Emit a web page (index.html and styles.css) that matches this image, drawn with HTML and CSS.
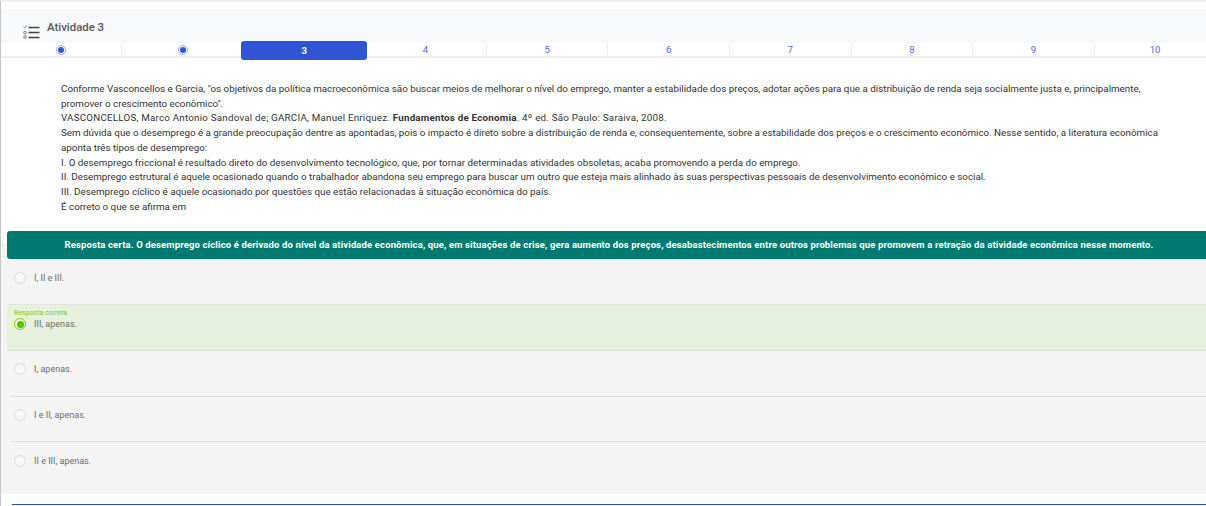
FILE: index.html
```html
<html>
<head>
	<meta charset="utf-8">
	<meta name="viewport" content="width=device-width, initial-scale=1">
	<title>Atividade 3</title>
	<link rel="stylesheet" href="styles.css">
</head>
<body>

	<header class="head">
		<svg class="head-icon" width="17" height="14" viewBox="0 0 17 14">
			<path d="M0.5 2 L1.7 3 L3.8 0.6" fill="none" stroke="#555" stroke-width="0.8"/>
			<circle cx="2" cy="7.5" r="1.3" fill="none" stroke="#666" stroke-width="0.8"/>
			<circle cx="2" cy="12" r="1.3" fill="none" stroke="#666" stroke-width="0.8"/>
			<path d="M5.5 2.5 H16.5 M5.5 7.5 H16.5 M5.5 12.5 H16.5" stroke="#444" stroke-width="1.4"/>
		</svg>
		<h1>Atividade 3</h1>
	</header>

	<nav class="steps">
		<div class="step"><span class="dot"></span></div>
		<div class="step"><span class="dot"></span></div>
		<div class="step active">3</div>
		<div class="step">4</div>
		<div class="step">5</div>
		<div class="step">6</div>
		<div class="step">7</div>
		<div class="step">8</div>
		<div class="step">9</div>
		<div class="step">10</div>
	</nav>

	<section class="question">
		<p>Conforme Vasconcellos e Garcia, "os objetivos da política macroeconômica são buscar meios de melhorar o nível do emprego, manter a estabilidade dos preços, adotar ações para que a distribuição de renda seja socialmente justa e, principalmente, promover o crescimento econômico".</p>
		<p class="source">VASCONCELLOS, Marco Antonio Sandoval de; GARCIA, Manuel Enriquez. <b>Fundamentos de Economia</b>. 4º ed. São Paulo: Saraiva, 2008.</p>
		<p>Sem dúvida que o desemprego é a grande preocupação dentre as apontadas, pois o impacto é direto sobre a distribuição de renda e, consequentemente, sobre a estabilidade dos preços e o crescimento econômico. Nesse sentido, a literatura econômica aponta três tipos de desemprego:</p>
		<p>I. O desemprego friccional é resultado direto do desenvolvimento tecnológico, que, por tornar determinadas atividades obsoletas, acaba promovendo a perda do emprego.</p>
		<p>II. Desemprego estrutural é aquele ocasionado quando o trabalhador abandona seu emprego para buscar um outro que esteja mais alinhado às suas perspectivas pessoais de desenvolvimento econômico e social.</p>
		<p>III. Desemprego cíclico é aquele ocasionado por questões que estão relacionadas à situação econômica do país.</p>
		<p>É correto o que se afirma em</p>
	</section>

	<section class="answers">
		<div class="feedback">Resposta certa. O desemprego cíclico é derivado do nível da atividade econômica, que, em situações de crise, gera aumento dos preços, desabastecimentos entre outros problemas que promovem a retração da atividade econômica nesse momento.</div>

		<div class="option first"><span class="radio"></span>I, II e III.</div>
		<div class="correct">
			<div class="correct-label">Resposta correta</div>
			<div class="option-line"><span class="radio checked"></span>III, apenas.</div>
		</div>
		<div class="option third"><span class="radio"></span>I, apenas.</div>
		<div class="option"><span class="radio"></span>I e II, apenas.</div>
		<div class="option last"><span class="radio"></span>II e III, apenas.</div>
	</section>

	<div class="bottom-line"></div>

</body>
</html>
```

FILE: styles.css
```css
*{
	box-sizing: border-box;
	padding: 0;
	margin: 0;
}
html, body
{
	height: 506px;
	overflow: hidden;
}
body
{
	background: #fff;
	border-top: 2px solid #f0f0f0;
	border-left: 1px solid #c4c4c4;
	padding-top: 7px;
	font-family: "Roboto", "Liberation Sans", sans-serif;
	color: #333;
}
.head
{
	height: 34px;
	background: #f8f9fb;
	display: flex;
	align-items: flex-start;
	padding-left: 22px;
}
.head-icon
{
	margin-top: 16px;
}
.head h1
{
	font-size: 11.4px;
	font-weight: 500;
	line-height: 14px;
	color: #555;
	margin: 11px 0 0 7px;
}
.steps
{
	display: flex;
	height: 15px;
	margin-left: -1px;
	border-bottom: 2px solid #eee;
}
.step
{
	flex: none;
	width: 121.6px;
	display: flex;
	align-items: center;
	justify-content: center;
	font-size: 9.6px;
	color: #5068d8;
	border-right: 1px solid #eee;
	height: 13px;
}
.step.active
{
	width: 126px;
	height: 19px;
	margin: -2px -2px 0 -2px;
	background: #2f55d4;
	color: #fff;
	font-weight: 700;
	border: 0;
	border-radius: 3px;
	z-index: 1;
}
.dot
{
	width: 10px;
	height: 10px;
	margin-left: 2px;
	border-radius: 50%;
	border: 1px solid #9aaaec;
	background: #fff;
	display: flex;
	align-items: center;
	justify-content: center;
}
.dot::after
{
	content: "";
	width: 6px;
	height: 6px;
	border-radius: 50%;
	background: #2f55d4;
}
.question
{
	padding: 24px 40px 0 60px;
	height: 173px;
	font-size: 9.8px;
	line-height: 14.7px;
	color: #333;
}
.source
{
	letter-spacing: 0.21px;
}
.answers
{
	height: 263px;
	background: linear-gradient(#fff 12px, #f4f4f4 12px);
}
.feedback
{
	margin-left: 6px;
	height: 28px;
	background: #007a70;
	color: #fff;
	font-size: 9.5px;
	font-weight: 700;
	letter-spacing: 0.13px;
	line-height: 27px;
	text-align: center;
	white-space: nowrap;
	border-radius: 3px 0 0 3px;
	padding-left: 5px;
}
.option, .option-line
{
	display: flex;
	align-items: center;
	font-size: 9px;
	color: #6e6e6e;
}
.option
{
	margin-left: 10px;
	padding-left: 3px;
	height: 45px;
	border-bottom: 1px solid #e0e0e0;
	padding-bottom: 8px;
}
.option.first
{
	height: 45px;
	padding: 0 0 8px 3px;
	border-bottom: 0;
}
.option.third
{
	height: 46px;
	padding-bottom: 9px;
}
.option.last
{
	border-bottom: 0;
	height: 53px;
	padding-bottom: 16px;
}
.radio
{
	width: 12px;
	height: 12px;
	border-radius: 50%;
	border: 1px solid #ddd;
	background: #f6f6f6;
	margin-right: 8px;
}
.radio.checked
{
	border-color: #6fd000;
	background: #f0f6e6;
	display: flex;
	align-items: center;
	justify-content: center;
}
.radio.checked::after
{
	content: "";
	width: 7px;
	height: 7px;
	border-radius: 50%;
	background: #58c000;
}
.correct
{
	margin-left: 6px;
	height: 47px;
	background: #e7f0dc;
	border-top: 1px solid #dfe3da;
	border-bottom: 1px solid #dfdfdf;
	border-radius: 3px 0 0 3px;
	padding: 4px 0 0 7px;
}
.correct-label
{
	font-size: 7px;
	line-height: 9px;
	color: #7fc832;
}
.correct .option-line
{
	height: 12px;
}
.bottom-line
{
	height: 1px;
	margin: 10px 0 0 11px;
	background: #2a4fb8;
}
```
